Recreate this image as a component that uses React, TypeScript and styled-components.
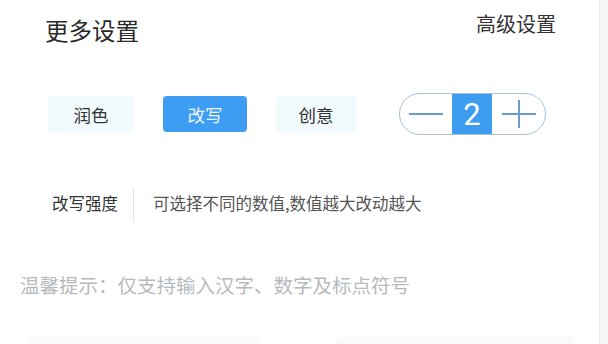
import React from "react";
import styled, { createGlobalStyle } from "styled-components";

const Global = createGlobalStyle`
  html, body { margin: 0; padding: 0; background: #ffffff; }
  body { font-family: "Noto Sans CJK SC", "Noto Sans", sans-serif; }
`;

const Page = styled.div`
  width: 608px;
  height: 344px;
  display: flex;
  overflow: hidden;
  background: #ffffff;
`;

const Main = styled.div`
  width: 600px;
  height: 344px;
  border-right: 1px solid #e8e8e8;
  display: flex;
  flex-direction: column;
  box-sizing: border-box;
  overflow: hidden;
  & > * {
    flex-shrink: 0;
  }
`;

const Gutter = styled.div`
  flex: 1;
  background: #f6f6f6;
`;

const Header = styled.div`
  height: 60px;
  display: flex;
  justify-content: space-between;
  align-items: flex-start;
  padding: 0 43px 0 45px;
`;

const Title = styled.div`
  margin-top: 19px;
  font-size: 23.5px;
  line-height: 1;
  color: #2a2a2a;
`;

const Advanced = styled.div`
  margin-top: 14px;
  font-size: 20px;
  line-height: 1;
  color: #333333;
`;

const OptionsRow = styled.div`
  margin-top: 33px;
  height: 42px;
  display: flex;
  align-items: center;
  padding-left: 48px;
  gap: 29px;
`;

const ModeButton = styled.div<{ $active?: boolean; $w: number }>`
  width: ${(p) => p.$w}px;
  height: 36px;
  display: flex;
  align-items: center;
  justify-content: center;
  border-radius: 4px;
  font-size: 17.5px;
  background: ${(p) => (p.$active ? "#3d9df2" : "#f1fbfd")};
  color: ${(p) => (p.$active ? "#eef6ff" : "#333333")};
`;

const Stepper = styled.div`
  margin-left: 14px;
  width: 147px;
  height: 42px;
  box-sizing: border-box;
  border: 1.5px solid #a9c4dc;
  border-radius: 21px;
  display: grid;
  grid-template-columns: 52px 40px 1fr;
  overflow: hidden;
`;

const StepCell = styled.div`
  display: flex;
  align-items: center;
  justify-content: center;
`;

const StepValue = styled.div`
  background: #3c9cf0;
  color: #ffffff;
  font-family: Roboto, "Noto Sans", sans-serif;
  font-size: 31px;
  line-height: 1;
  display: flex;
  align-items: center;
  justify-content: center;
`;

const StrengthRow = styled.div`
  margin-top: 54px;
  height: 33px;
  display: flex;
  align-items: center;
  padding-left: 52px;
`;

const Label = styled.div`
  font-size: 16.5px;
  line-height: 1;
  color: #333333;
  margin-top: -4px;
`;

const Divider = styled.div`
  width: 1px;
  height: 33px;
  background: #e2e2e2;
  margin: 0 19px 0 15px;
`;

const Desc = styled.div`
  font-size: 16.5px;
  line-height: 1;
  color: #555555;
  margin-top: -4px;
`;

const Hint = styled.div`
  margin-top: 53px;
  padding-left: 20px;
  font-size: 19.5px;
  line-height: 1;
  color: #b6babd;
`;

const BottomRow = styled.div`
  margin-top: 42px;
  display: flex;
  padding-left: 30px;
  gap: 75px;
`;

const FaintBox = styled.div<{ $w: number }>`
  width: ${(p) => p.$w}px;
  height: 20px;
  background: #f8fbfa;
  border-radius: 4px;
`;

export default function App() {
  return (
    <>
      <Global />
      <Page>
        <Main>
          <Header>
            <Title>更多设置</Title>
            <Advanced>高级设置</Advanced>
          </Header>
          <OptionsRow>
            <ModeButton $w={86}>润色</ModeButton>
            <ModeButton $w={84} $active>
              改写
            </ModeButton>
            <ModeButton $w={80}>创意</ModeButton>
            <Stepper>
              <StepCell>
                <svg width="34" height="4" viewBox="0 0 34 4">
                  <line x1="0" y1="2" x2="34" y2="2" stroke="#6a9ccc" strokeWidth="2" />
                </svg>
              </StepCell>
              <StepValue>2</StepValue>
              <StepCell>
                <svg width="34" height="28" viewBox="0 0 34 28">
                  <line x1="0" y1="14" x2="34" y2="14" stroke="#6a9ccc" strokeWidth="2" />
                  <line x1="17" y1="0" x2="17" y2="28" stroke="#6a9ccc" strokeWidth="2" />
                </svg>
              </StepCell>
            </Stepper>
          </OptionsRow>
          <StrengthRow>
            <Label>改写强度</Label>
            <Divider />
            <Desc>可选择不同的数值,数值越大改动越大</Desc>
          </StrengthRow>
          <Hint>温馨提示：仅支持输入汉字、数字及标点符号</Hint>
          <BottomRow>
            <FaintBox $w={230} />
            <FaintBox $w={240} />
          </BottomRow>
        </Main>
        <Gutter />
      </Page>
    </>
  );
}
